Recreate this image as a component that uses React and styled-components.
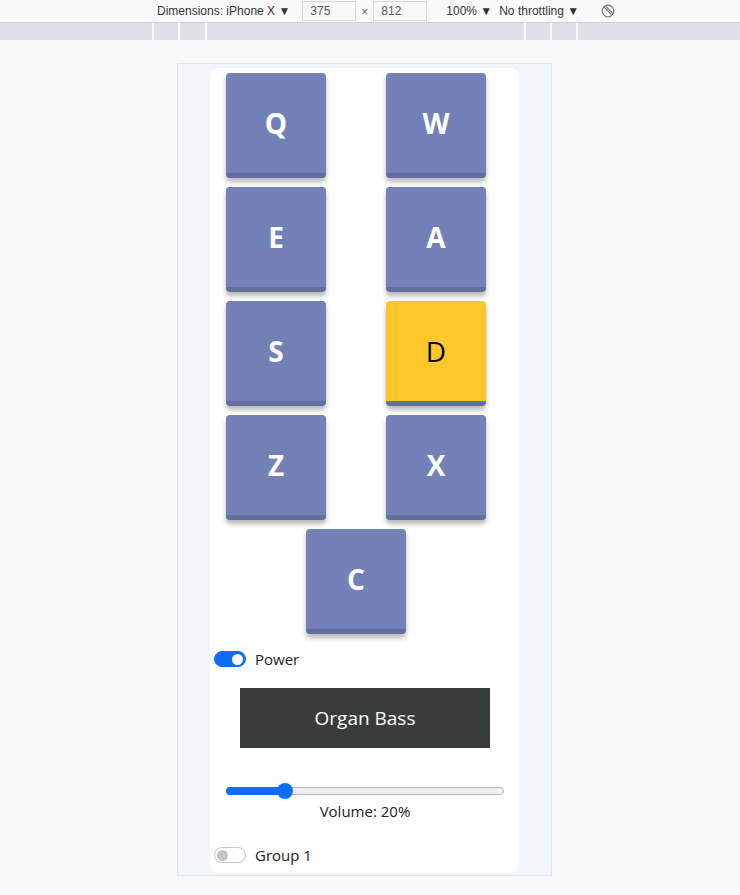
import React from "react"
import styled, { createGlobalStyle } from "styled-components"

const GlobalStyle = createGlobalStyle`
  html, body {
    margin: 0;
    padding: 0;
    background: #f9f9f9;
    font-family: "Open Sans", "Noto Sans", sans-serif;
  }
`

const Toolbar = styled.div`
  height: 23px;
  display: flex;
  align-items: center;
  background: #fafafa;
  border-bottom: 1px solid #d0d0d0;
  font-family: "Liberation Sans", Arial, sans-serif;
  font-size: 12px;
  color: #333;
  padding-left: 157px;
  box-sizing: border-box;
`

const ToolText = styled.span`
  margin-right: ${(p) => p.gap || 0}px;
  white-space: nowrap;
`

const SizeInput = styled.div`
  width: 54px;
  height: 20px;
  box-sizing: border-box;
  border: 1px solid #d6d6d6;
  background: #fafafa;
  padding-left: 7px;
  line-height: 18px;
  color: #555;
`

const Times = styled.span`
  margin: 2px 5px 0 5px;
  color: #666;
`

const Ruler = styled.div`
  height: 17px;
  display: flex;
  background: #dee1e6;
`

const RulerSeg = styled.div`
  width: ${(p) => p.w}px;
  flex: ${(p) => (p.w ? "none" : "1")};
  border-left: ${(p) => (p.first ? "none" : "2px solid #fff")};
  box-sizing: border-box;
`

const Stage = styled.div`
  padding: 23px 0 0 177px;
`

const Device = styled.div`
  width: 375px;
  height: 813px;
  box-sizing: border-box;
  border: 1px solid #e3e5ea;
  background: #f3f6fd;
  padding: 4px 0 0 32px;
`

const Card = styled.div`
  width: 309px;
  height: 805px;
  background: #fff;
  border-radius: 7px;
  box-shadow: 0 0 1px rgba(0, 0, 0, 0.08);
  padding: 5px 0 0 16px;
  box-sizing: border-box;
`

const PadGrid = styled.div`
  display: grid;
  grid-template-columns: 100px 100px;
  column-gap: 60px;
  row-gap: 9px;
  width: 260px;
`

const Pad = styled.div`
  height: 100px;
  border-bottom: 5px solid #636f9e;
  border-radius: 4px;
  background: ${(p) => (p.active ? "#ffc82a" : "#7282b8")};
  color: ${(p) => (p.active ? "#000" : "#fff")};
  font-weight: ${(p) => (p.active ? 500 : 700)};
  font-size: 28px;
  display: flex;
  align-items: center;
  justify-content: center;
  box-shadow: 0 4px 5px rgba(0, 0, 0, 0.28);
  grid-column: ${(p) => (p.wide ? "1 / span 2" : "auto")};
  justify-self: ${(p) => (p.wide ? "center" : "stretch")};
  width: ${(p) => (p.wide ? "100px" : "auto")};
`

const SwitchRow = styled.div`
  display: flex;
  align-items: center;
  margin: ${(p) => p.m};
  margin-left: -12px;
  font-size: 15px;
  color: #222;
`

const Switch = styled.div`
  width: 32px;
  height: 16px;
  box-sizing: border-box;
  border-radius: 8px;
  border: 1px solid ${(p) => (p.on ? "#0d6efd" : "#c4c4c4")};
  background: ${(p) => (p.on ? "#0d6efd" : "#fff")};
  display: flex;
  align-items: center;
  justify-content: ${(p) => (p.on ? "flex-end" : "flex-start")};
  padding: 0 2px;
  margin-right: 9px;
`

const Knob = styled.div`
  width: 11px;
  height: 11px;
  border-radius: 50%;
  background: ${(p) => (p.on ? "#fff" : "#c4c4c4")};
`

const Display = styled.div`
  width: 250px;
  height: 60px;
  margin: 19px 0 0 14px;
  background: #383d3c;
  color: #fff;
  font-size: 19px;
  display: flex;
  align-items: center;
  justify-content: center;
`

const SliderBox = styled.div`
  margin: 39px 0 0 0;
  width: 278px;
  display: flex;
  flex-direction: column;
  align-items: center;
`

const Track = styled.div`
  position: relative;
  width: 278px;
  height: 8px;
  box-sizing: border-box;
  border: 1px solid #b8b8b8;
  border-radius: 4px;
  background: #efefef;
`

const Fill = styled.div`
  position: absolute;
  left: -1px;
  top: -1px;
  height: 8px;
  border-radius: 4px;
  background: #0d6efd;
`

const Thumb = styled.div`
  position: absolute;
  top: -5px;
  width: 16px;
  height: 16px;
  margin-left: -8px;
  border-radius: 50%;
  background: #0d6efd;
`

const VolumeLabel = styled.div`
  margin-top: 6px;
  font-size: 15px;
  color: #222;
`

const RotateIcon = () => (
  <svg width="14" height="14" viewBox="0 0 14 14" style={{ marginLeft: 22 }}>
    <circle cx="7" cy="7" r="5.8" fill="none" stroke="#777" strokeWidth="1.2" />
    <path d="M3.2 3.2 L10.8 10.8" stroke="#777" strokeWidth="1.2" />
    <path d="M4.6 2.2 L11.8 9.4" stroke="#777" strokeWidth="1.2" />
  </svg>
)

const pads = ["Q", "W", "E", "A", "S", "D", "Z", "X"]

export default function App() {
  const volume = 20
  return (
    <>
      <GlobalStyle />
      <Toolbar>
        <ToolText gap={12}>Dimensions: iPhone X ▼</ToolText>
        <SizeInput>375</SizeInput>
        <Times>×</Times>
        <SizeInput>812</SizeInput>
        <ToolText gap={7} style={{ marginLeft: 19 }}>100% ▼</ToolText>
        <ToolText>No throttling ▼</ToolText>
        <RotateIcon />
      </Toolbar>
      <Ruler>
        <RulerSeg w={152} first />
        <RulerSeg w={26} />
        <RulerSeg w={27} />
        <RulerSeg w={319} />
        <RulerSeg w={26} />
        <RulerSeg w={26} />
        <RulerSeg />
      </Ruler>
      <Stage>
        <Device>
          <Card>
            <PadGrid>
              {pads.map((k) => (
                <Pad key={k} active={k === "D"}>
                  {k}
                </Pad>
              ))}
              <Pad wide>C</Pad>
            </PadGrid>
            <SwitchRow m="15px 0 0 0">
              <Switch on>
                <Knob on />
              </Switch>
              Power
            </SwitchRow>
            <Display>Organ Bass</Display>
            <SliderBox>
              <Track>
                <Fill style={{ width: `${volume}%` }} />
                <Thumb style={{ left: `${volume + 1}%` }} />
              </Track>
              <VolumeLabel>Volume: {volume}%</VolumeLabel>
            </SliderBox>
            <SwitchRow m="24px 0 0 0">
              <Switch>
                <Knob />
              </Switch>
              Group 1
            </SwitchRow>
          </Card>
        </Device>
      </Stage>
    </>
  )
}
